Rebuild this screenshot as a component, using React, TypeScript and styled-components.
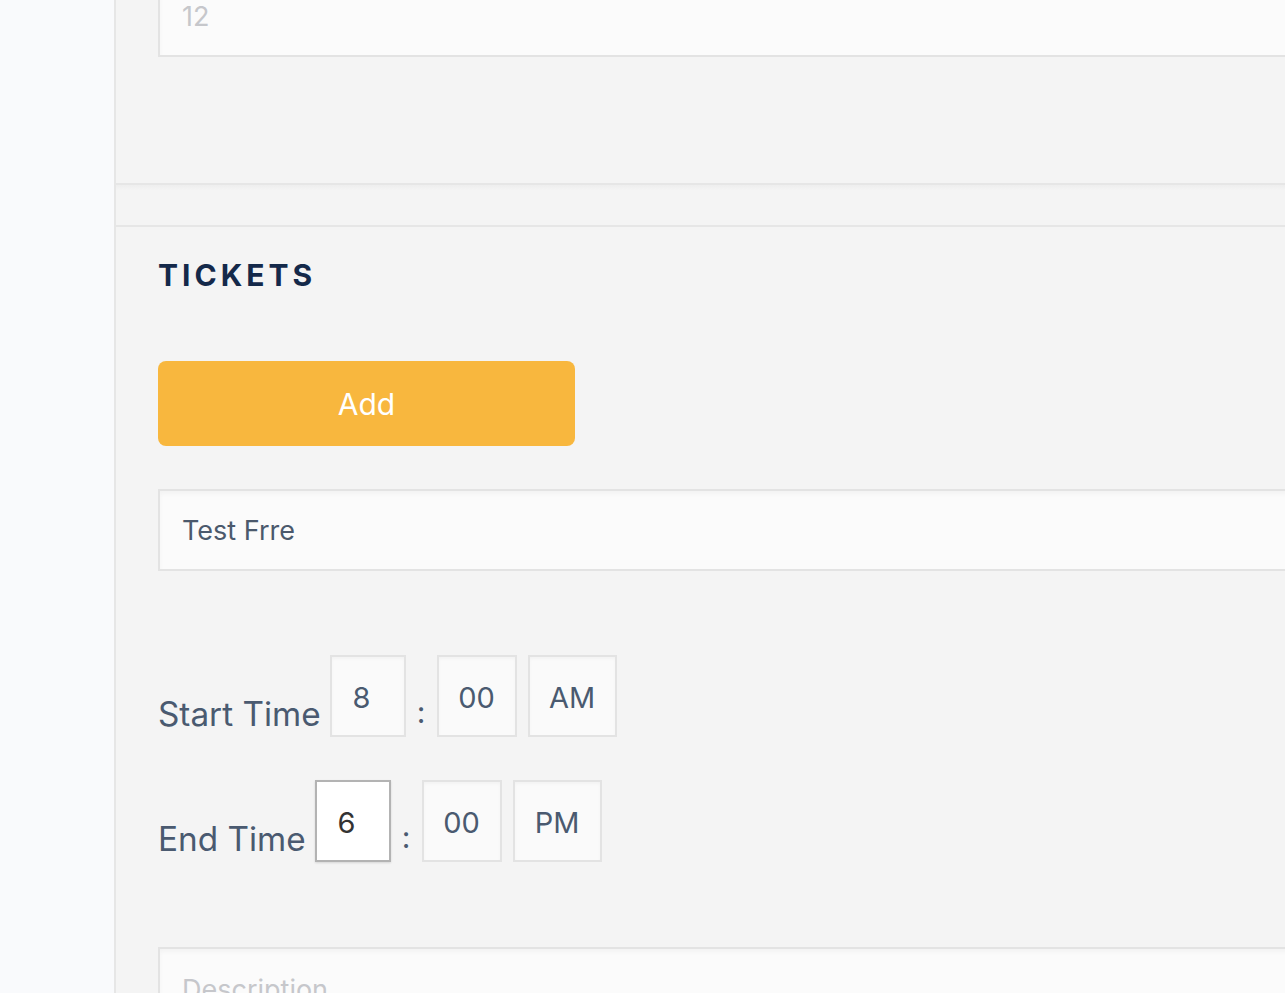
import styled, { createGlobalStyle } from "styled-components";

const GlobalStyle = createGlobalStyle`
  html, body {
    margin: 0;
    padding: 0;
    background: #f9fafc;
    overflow: hidden;
  }
  * {
    box-sizing: border-box;
  }
`;

const Page = styled.div`
  display: flex;
  height: 993px;
  overflow: hidden;
  font-family: Inter, "Liberation Sans", sans-serif;
`;

const Sidebar = styled.div`
  flex: 0 0 116px;
  background: #f9fafc;
  border-right: 2px solid #e6e6e6;
`;

const Main = styled.div`
  flex: 0 0 1300px;
  background: #f4f4f4;
  margin-top: -25px;
`;

const Section = styled.section`
  padding: 0 0 0 42px;
  border-bottom: 2px solid #e6e6e6;
`;

const Spacer = styled.div`
  height: 42px;
  border-bottom: 2px solid #e6e6e6;
  background: linear-gradient(#eeeeee, #f4f4f4 5px);
`;

const TextInput = styled.div<{ $placeholder?: boolean }>`
  height: 82px;
  display: flex;
  align-items: center;
  padding: 0 22px;
  background: #fbfbfb;
  border: 2px solid #e3e3e3;
  box-shadow: inset 0 3px 4px rgba(0, 0, 0, 0.035);
  font-size: 27px;
  color: ${(p) => (p.$placeholder ? "#c6c7cb" : "#4b596c")};
`;

const TopInput = styled(TextInput)`
  margin-bottom: 126px;
`;

const Heading = styled.h2`
  margin: 0;
  padding-top: 30px;
  font-size: 30px;
  line-height: 36px;
  font-weight: 700;
  letter-spacing: 4px;
  color: #14294a;
`;

const AddButton = styled.button`
  display: block;
  margin-top: 68px;
  width: 417px;
  height: 85px;
  border: none;
  border-radius: 8px;
  background: #f8b73e;
  color: #ffffff;
  font-family: inherit;
  font-size: 30px;
  font-weight: 400;
`;

const NameInput = styled(TextInput)`
  margin-top: 43px;
`;

const TimeRow = styled.div<{ $top: number }>`
  display: flex;
  align-items: flex-end;
  margin-top: ${(p) => p.$top}px;
`;

const Label = styled.span`
  font-size: 33.3px;
  line-height: 34px;
  color: #4a5a70;
  margin-right: 9px;
  padding-bottom: 6px;
`;

const Box = styled.div<{ $w: number; $active?: boolean; $shift?: number }>`
  width: ${(p) => p.$w}px;
  height: 82px;
  display: flex;
  align-items: center;
  justify-content: center;
  padding-right: ${(p) => p.$shift || 0}px;
  padding-top: 2px;
  background: ${(p) => (p.$active ? "#ffffff" : "#fafafa")};
  border: 2px solid ${(p) => (p.$active ? "#b3b3b3" : "#e3e3e3")};
  box-shadow: ${(p) =>
    p.$active ? "0 1px 2px rgba(0,0,0,0.12)" : "inset 0 2px 3px rgba(0,0,0,0.03)"};
  font-size: 29px;
  color: ${(p) => (p.$active ? "#333333" : "#4a5a70")};
  margin-right: ${(p) => (p.$active !== undefined ? 0 : 11)}px;
`;

const Colon = styled.span`
  width: 31px;
  text-align: center;
  font-size: 30px;
  line-height: 30px;
  color: #4a5a70;
  padding-bottom: 10px;
`;

const DescInput = styled(TextInput)`
  margin-top: 85px;
  align-items: flex-start;
  padding-top: 24px;
`;

function TimeField({
  label,
  hour,
  minute,
  period,
  top,
  active,
}: {
  label: string;
  hour: string;
  minute: string;
  period: string;
  top: number;
  active?: boolean;
}) {
  return (
    <TimeRow $top={top}>
      <Label>{label}</Label>
      <Box $w={76} $active={!!active} $shift={12}>
        {hour}
      </Box>
      <Colon>:</Colon>
      <Box $w={80}>{minute}</Box>
      <Box $w={89}>{period}</Box>
    </TimeRow>
  );
}

export default function App() {
  return (
    <>
      <GlobalStyle />
      <Page>
        <Sidebar />
        <Main>
          <Section>
            <TopInput $placeholder>12</TopInput>
          </Section>
          <Spacer />
          <Section>
            <Heading>TICKETS</Heading>
            <AddButton>Add</AddButton>
            <NameInput>Test Frre</NameInput>
            <TimeField label="Start Time" hour="8" minute="00" period="AM" top={84} />
            <TimeField label="End Time" hour="6" minute="00" period="PM" top={43} active />
            <DescInput $placeholder>Description</DescInput>
          </Section>
        </Main>
      </Page>
    </>
  );
}
